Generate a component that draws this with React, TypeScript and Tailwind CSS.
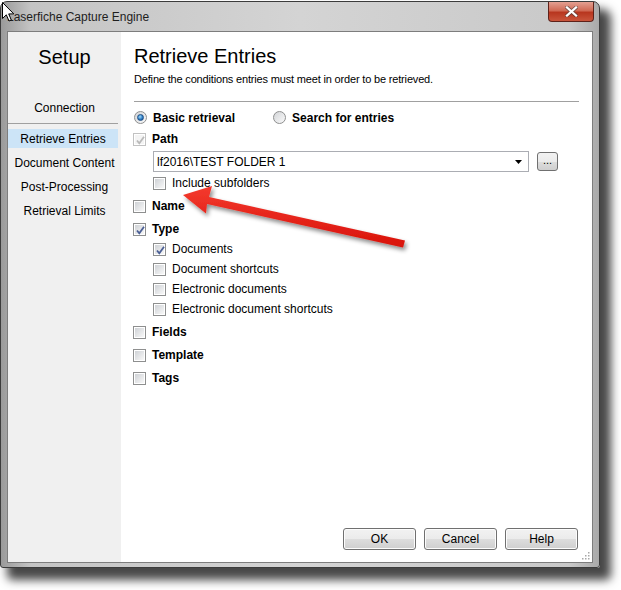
import type { ReactNode } from 'react';

const SIDE_ITEMS = ['Retrieve Entries', 'Document Content', 'Post-Processing', 'Retrieval Limits'];

function CheckBox({ checked = false, disabled = false }: { checked?: boolean; disabled?: boolean }) {
  return (
    <span
      className={`relative flex h-[13px] w-[13px] shrink-0 items-center justify-center border bg-white p-[1px] ${
        disabled ? 'border-[#c2c2c2]' : 'border-[#8e8f8f]'
      }`}
    >
      <span
        className={`block h-full w-full ${
          disabled ? 'bg-[#f4f4f4]' : 'bg-gradient-to-br from-[#cfd2d6] to-[#f8f8f8]'
        }`}
      />
      {checked && (
        <svg className="absolute left-[1px] top-[1px] h-[11px] w-[11px]" viewBox="0 0 11 11">
          <path
            d="M2 5.5 L4.3 8.3 L9 1.8"
            fill="none"
            stroke={disabled ? '#b9b9b9' : '#4b5f95'}
            strokeWidth={1.8}
          />
        </svg>
      )}
    </span>
  );
}

function Radio({ selected = false }: { selected?: boolean }) {
  return (
    <span className="flex h-[13px] w-[13px] shrink-0 items-center justify-center rounded-full border border-[#8e8f8f] bg-gradient-to-br from-[#d3d5d8] to-[#fafafa]">
      {selected && (
        <span className="block h-[7px] w-[7px] rounded-full border border-[#1f4f86] bg-[radial-gradient(circle_at_40%_35%,#9fdcfb,#2a77c0_60%,#174b87)]" />
      )}
    </span>
  );
}

function Row({ children, className = '' }: { children: ReactNode; className?: string }) {
  return <div className={`flex h-[20px] items-center ${className}`}>{children}</div>;
}

function Option({ label, checked, bold, disabled }: { label: string; checked?: boolean; bold?: boolean; disabled?: boolean }) {
  return (
    <>
      <CheckBox checked={checked} disabled={disabled} />
      <span className={`${bold ? 'ml-[6px] font-bold' : 'ml-[6px]'} text-[12px] text-black`}>{label}</span>
    </>
  );
}

function WinButton({ label }: { label: string }) {
  return (
    <button
      type="button"
      className="h-[22px] w-[73px] rounded-[3px] border border-[#707070] bg-[linear-gradient(#f2f2f2_0%,#ebebeb_50%,#dddddd_51%,#cfcfcf_100%)] text-[12px] text-black shadow-[inset_0_0_0_1px_#fcfcfc]"
    >
      {label}
    </button>
  );
}

export default function App() {
  return (
    <div className="relative h-[590px] w-[621px] overflow-hidden bg-white font-['Liberation_Sans',Arial,sans-serif] text-black">
      {/* Window frame */}
      <div className="mt-[1px] flex h-[567px] w-[600px] flex-col rounded-t-[7px] rounded-b-[3px] border border-[#3c3c3c] bg-[linear-gradient(90deg,#9a9a9a_0%,#c4c4c4_5%,#d4d4d4_50%,#c9c9c9_95%,#a9a9a9_100%)] shadow-[9px_10px_10px_2px_rgba(0,0,0,0.72)]">
        {/* Title bar */}
        <div className="flex h-[29px] shrink-0 items-start justify-between pl-[6px] pr-[5px]">
          <span className="mt-[8px] text-[12px] leading-[15px] text-[#1e1e1e]">Laserfiche Capture Engine</span>
          <button
            type="button"
            aria-label="Close"
            className="flex h-[20px] w-[46px] items-center justify-center rounded-b-[4px] border border-t-0 border-[#5e2119] bg-[linear-gradient(#e3a092_0%,#d06a55_45%,#b8361f_55%,#c9553c_100%)]"
          >
            <svg width="13" height="11" viewBox="0 0 13 11">
              <path d="M2 1.5 L11 9.5 M11 1.5 L2 9.5" stroke="#3a3a3a" strokeWidth={3.8} strokeLinecap="square" opacity={0.6} />
              <path d="M2 1.5 L11 9.5 M11 1.5 L2 9.5" stroke="#ffffff" strokeWidth={2.3} strokeLinecap="square" />
            </svg>
          </button>
        </div>

        {/* Client area */}
        <div className="mx-[6px] mb-[4px] flex flex-1 border border-[#7d7d7d] bg-white">
          {/* Sidebar */}
          <div className="flex w-[113px] shrink-0 flex-col bg-[#f0f0f0]">
            <div className="mt-[13px] text-center text-[20px] leading-[24px]">Setup</div>
            <div className="mt-[31px] text-center text-[12px] leading-[16px]">Connection</div>
            <div className="mt-[7px] mr-[3px] h-px bg-[#a0a0a0]" />
            <div className="mt-[5px] flex flex-col">
              {SIDE_ITEMS.map((item, i) => (
                <div
                  key={item}
                  className={`flex h-[19px] items-center justify-center text-[12px] ${
                    i === 0 ? 'mr-[3px] bg-[#cce4f7]' : ''
                  } ${i > 0 ? 'mt-[5px]' : ''}`}
                >
                  {item}
                </div>
              ))}
            </div>
          </div>

          {/* Main panel */}
          <div className="relative flex flex-1 flex-col pl-[12px] pr-[13px]">
            <div className="mt-[12px] pl-px text-[20px] leading-[24px]">Retrieve Entries</div>
            <div className="mt-[4px] pl-px text-[11px] leading-[14px] tracking-[-0.17px]">
              Define the conditions entries must meet in order to be retrieved.
            </div>
            <div className="mt-[15px] ml-px h-px bg-[#a0a0a0]" />

            <div className="mt-[5px] flex h-[21px] items-center pl-px">
              <Radio selected />
              <span className="ml-[6px] text-[12px] font-bold">Basic retrieval</span>
              <span className="ml-[38px] flex items-center">
                <Radio />
                <span className="ml-[6px] text-[12px] font-bold">Search for entries</span>
              </span>
            </div>

            <Row className="mt-px">
              <Option label="Path" checked bold disabled />
            </Row>
            <div className="mt-[2px] flex h-[21px] items-center pl-[20px]">
              <div className="flex h-[21px] w-[376px] items-center justify-between border border-[#abadb3] bg-white pl-[3px] pr-[6px]">
                <span className="text-[12px]">{'lf2016\\TEST FOLDER 1'}</span>
                <svg width="7" height="4" viewBox="0 0 7 4">
                  <path d="M0 0 H7 L3.5 4 Z" fill="#000" />
                </svg>
              </div>
              <button
                type="button"
                className="ml-[8px] h-[19px] w-[21px] rounded-[3px] border border-[#707070] bg-[linear-gradient(#f2f2f2_0%,#ebebeb_50%,#dddddd_51%,#cfcfcf_100%)] pb-[4px] text-[11px] leading-[10px]"
              >
                ...
              </button>
            </div>
            <Row className="mt-[1px] pl-[20px]">
              <Option label="Include subfolders" />
            </Row>
            <Row className="mt-[3px]">
              <Option label="Name" bold />
            </Row>
            <Row className="mt-[3px]">
              <Option label="Type" checked bold />
            </Row>
            <Row className="pl-[20px]">
              <Option label="Documents" checked />
            </Row>
            <Row className="pl-[20px]">
              <Option label="Document shortcuts" />
            </Row>
            <Row className="pl-[20px]">
              <Option label="Electronic documents" />
            </Row>
            <Row className="pl-[20px]">
              <Option label="Electronic document shortcuts" />
            </Row>
            <Row className="mt-[3px]">
              <Option label="Fields" bold />
            </Row>
            <Row className="mt-[3px]">
              <Option label="Template" bold />
            </Row>
            <Row className="mt-[3px]">
              <Option label="Tags" bold />
            </Row>

            <div className="mt-auto mb-[12px] flex justify-end gap-[8px] pr-[1px]">
              <WinButton label="OK" />
              <WinButton label="Cancel" />
              <WinButton label="Help" />
            </div>

            {/* Resize grip */}
            <svg className="absolute bottom-[2px] right-[2px]" width="9" height="9" viewBox="0 0 9 9">
              {[
                [7, 1],
                [4, 4],
                [7, 4],
                [1, 7],
                [4, 7],
                [7, 7],
              ].map(([x, y]) => (
                <rect key={`${x}-${y}`} x={x} y={y} width="1.5" height="1.5" fill="#a8a8a8" />
              ))}
            </svg>
          </div>
        </div>
      </div>

      {/* Red annotation arrow */}
      <svg className="pointer-events-none absolute left-0 top-0" width="621" height="590" viewBox="0 0 621 590">
        <defs>
          <filter id="arrowShadow" x="-20%" y="-50%" width="140%" height="200%">
            <feDropShadow dx="2" dy="3" stdDeviation="2" floodColor="#000" floodOpacity="0.45" />
          </filter>
          <linearGradient id="arrowFill" x1="0" y1="0" x2="0" y2="1">
            <stop offset="0" stopColor="#f43a2e" />
            <stop offset="1" stopColor="#d8120a" />
          </linearGradient>
        </defs>
        <g filter="url(#arrowShadow)">
          <path
            d="M405 240.5 L209 197 L212 186 L183 195 L206 213.5 L207 204 L403 247.5 Z"
            fill="url(#arrowFill)"
          />
        </g>
      </svg>

      {/* Mouse cursor over the title */}
      <svg className="pointer-events-none absolute left-[2px] top-[2px]" width="13" height="21" viewBox="0 0 13 21">
        <path
          d="M0.5 0.5 L0.5 16.5 L4.3 12.8 L7 19 L9.3 18 L6.7 11.9 L11.8 11.9 Z"
          fill="#ffffff"
          stroke="#000000"
          strokeWidth={1}
          strokeLinejoin="miter"
        />
      </svg>
    </div>
  );
}
